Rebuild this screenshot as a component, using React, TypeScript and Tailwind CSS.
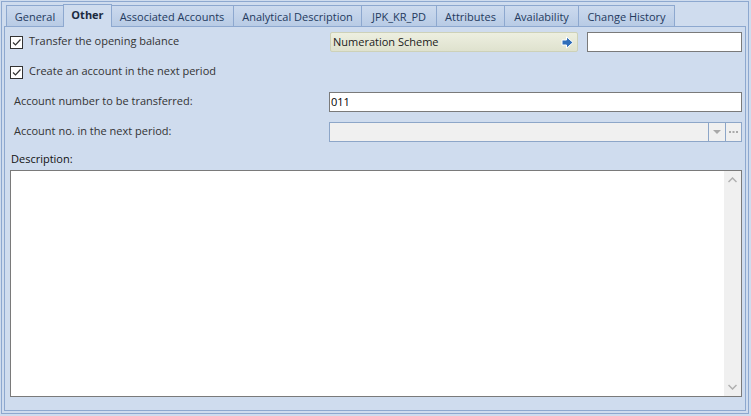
import React from "react";

const font = { fontFamily: '"Open Sans", "Noto Sans", sans-serif' };

function Check() {
  return (
    <div className="w-[13px] h-[13px] border border-[#333333] bg-white flex items-center justify-center shrink-0">
      <svg width="11" height="11" viewBox="0 0 11 11">
        <path d="M2 5.5 L4.5 8 L9.5 2.5" fill="none" stroke="#333" strokeWidth="1.2" />
      </svg>
    </div>
  );
}

const tabs = [
  { t: "General", w: 57 },
  { t: "Other", w: 47, active: true },
  { t: "Associated Accounts", w: 123 },
  { t: "Analytical Description", w: 128 },
  { t: "JPK_KR_PD", w: 75 },
  { t: "Attributes", w: 68 },
  { t: "Availability", w: 74 },
  { t: "Change History", w: 96 },
];

export default function App() {
  return (
    <div className="w-[751px] h-[416px] bg-[#CFDCEE] p-[1px] text-[11px] text-[#333]" style={font}>
      <div className="w-[748px] h-[413px] border border-[#8DA8CF] p-[2px] flex flex-col">
        <div className="h-[22px] flex items-end pl-[2px] relative z-10">
          {tabs.map((tb) =>
            tb.active ? (
              <div
                key={tb.t}
                className="h-[23px] -mb-[1px] bg-[#CFDCEE] border border-b-0 border-[#8DA8CF] flex items-center justify-center font-bold text-[#1B2A40] -mx-[1px] relative z-10 pb-[1px]"
                style={{ width: tb.w + 2 }}
              >
                {tb.t}
              </div>
            ) : (
              <div
                key={tb.t}
                className="h-[21px] bg-gradient-to-b from-[#CCDAEE] to-[#B8CBE5] border border-b-0 border-[#8DA8CF] -ml-[1px] first:ml-0 flex items-center justify-center text-[#243A5E] pt-[2px]"
                style={{ width: tb.w + 1 }}
              >
                {tb.t}
              </div>
            )
          )}
        </div>
        <div className="flex-1 border border-[#8DA8CF] pl-[5px] pr-[3px] pt-[5px] flex flex-col">
          <div className="h-[20px] flex items-center">
            <div className="w-[319px] flex items-center">
              <Check />
              <span className="ml-[6px] -mt-[1px]">Transfer the opening balance</span>
            </div>
            <div className="ml-[1px] w-[248px] h-[20px] rounded-[2px] border border-[#CDD1B8] bg-gradient-to-b from-[#EDEFE0] to-[#DFE2CE] flex items-center pl-[2px] pr-[3px] text-[#1a1a1a]">
              <span className="flex-1">Numeration Scheme</span>
              <svg width="13" height="13" viewBox="0 0 13 13">
                <path d="M1 4 H5.5 V0.8 L12 6.5 L5.5 12.2 V9 H1 Z" fill="#2F6EBA" stroke="#fff" strokeWidth="1" strokeLinejoin="round" />
              </svg>
            </div>
            <div className="ml-[9px] flex-1 h-[20px] border border-[#7A7A7A] bg-white" />
          </div>
          <div className="h-[20px] mt-[10px] flex items-center">
            <Check />
            <span className="ml-[6px] -mt-[1px]">Create an account in the next period</span>
          </div>
          <div className="h-[20px] mt-[10px] flex items-center">
            <div className="w-[319px] pl-[4px] -mt-[2px]">Account number to be transferred:</div>
            <div className="flex-1 h-[20px] border border-[#7A7A7A] bg-white flex items-center pl-[1px] text-black">011</div>
          </div>
          <div className="h-[20px] mt-[10px] flex items-center">
            <div className="w-[319px] pl-[4px] -mt-[2px]">Account no. in the next period:</div>
            <div className="flex-1 h-[20px] border border-[#8DA6C8] bg-[#F0F0F0] flex">
              <div className="flex-1" />
              <div className="w-[17px] border-l border-[#8DA6C8] flex items-center justify-center">
                <svg width="8" height="5" viewBox="0 0 8 5"><path d="M0 0 H8 L4 4 Z" fill="#A9A9A9" /></svg>
              </div>
              <div className="w-[16px] border-l border-[#8DA6C8] flex items-center justify-center">
                <svg width="9" height="2" viewBox="0 0 9 2"><rect x="0" y="0" width="2" height="2" fill="#AAA" /><rect x="3.5" y="0" width="2" height="2" fill="#AAA" /><rect x="7" y="0" width="2" height="2" fill="#AAA" /></svg>
              </div>
            </div>
          </div>
          <div className="h-[20px] mt-[7px] flex items-center pl-[1px] text-[#111]">Description:</div>
          <div className="h-[227px] mt-[1px] border border-[#7A7A7A] bg-white flex justify-end">
            <div className="w-[17px] bg-[#F0F0F0] flex flex-col items-center justify-between py-[6px]">
              <svg width="9" height="6" viewBox="0 0 9 6"><path d="M0.5 5 L4.5 1 L8.5 5" fill="none" stroke="#B0B0B0" strokeWidth="1.5" /></svg>
              <svg width="9" height="6" viewBox="0 0 9 6"><path d="M0.5 1 L4.5 5 L8.5 1" fill="none" stroke="#B0B0B0" strokeWidth="1.5" /></svg>
            </div>
          </div>
        </div>
      </div>
    </div>
  );
}
